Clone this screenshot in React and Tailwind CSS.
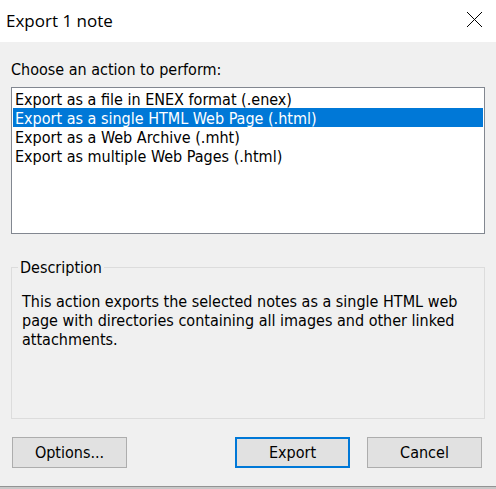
const actions = [
  'Export as a file in ENEX format (.enex)',
  'Export as a single HTML Web Page (.html)',
  'Export as a Web Archive (.mht)',
  'Export as multiple Web Pages (.html)',
];

export default function App() {
  return (
    <main className="min-h-screen bg-[#c8c8c8] font-['DejaVu_Sans_Condensed','Noto_Sans',sans-serif] text-[16px] leading-[19px] text-black">
      <div className="border-b border-[#939393] bg-[#f0f0f0]">
        <header className="flex h-[42px] items-center justify-between bg-white pr-3 pb-[2px] pl-[6px]">
          <h1 className="font-['Open_Sans','Noto_Sans',sans-serif] text-[17px]">Export 1 note</h1>
          <button type="button" aria-label="Close">
            <svg className="block" width="20" height="20" viewBox="0 0 20 20" stroke="#000" strokeWidth="1" fill="none">
              <path d="M3 2 18 17M18 2 3 17" />
            </svg>
          </button>
        </header>
        <form className="px-[11px] pt-[18px] pb-[18px]">
          <label htmlFor="action" className="block">Choose an action to perform:</label>
          <select id="action" size={4} defaultValue={actions[1]} className="mt-2 block h-[147px] w-full overflow-hidden border border-[#828790] bg-white p-px">
            {actions.map((a) => (
              <option key={a} className="h-[19px] min-h-0 p-0 px-0.5 pt-px leading-[19px] checked:bg-[#0078d7] checked:bg-none checked:text-white">{a}</option>
            ))}
          </select>
          <fieldset className="mt-6 h-[161px] border border-[#dcdcdc] px-[10px]">
            <legend className="-ml-1 px-0.5">Description</legend>
            <p className="mt-[15px]">This action exports the selected notes as a single HTML web page with directories containing all images and other linked attachments.</p>
          </fieldset>
          <div className="mt-[18px] flex pr-[3px] pl-px">
            <button type="button" className="h-[31px] w-[115px] border border-[#adadad] bg-[#e1e1e1]">Options...</button>
            <button type="button" className="ml-auto h-[31px] w-[115px] border-2 border-[#0078d7] bg-[#e1e1e1]">Export</button>
            <button type="button" className="ml-[17px] h-[31px] w-[115px] border border-[#adadad] bg-[#e1e1e1]">Cancel</button>
          </div>
        </form>
      </div>
    </main>
  );
}
